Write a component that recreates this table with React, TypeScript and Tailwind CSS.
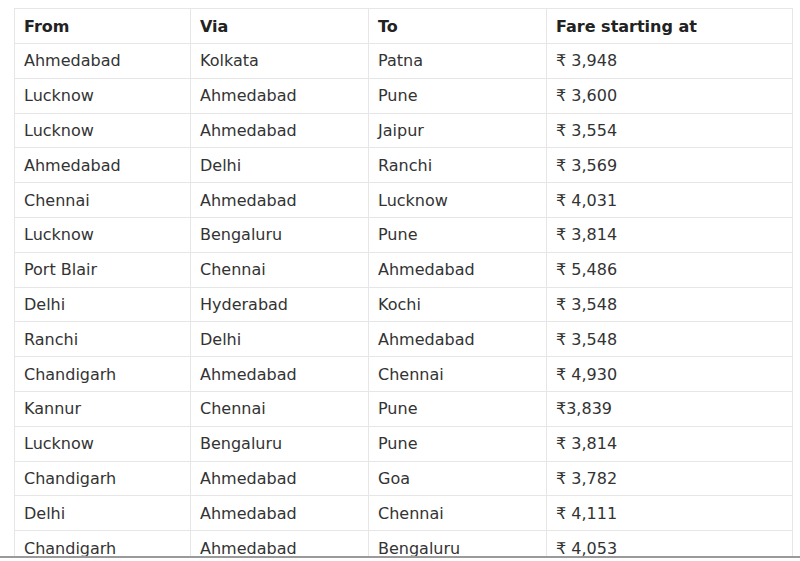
import React from "react";

const rows: [string, string, string, string][] = [
  ["Ahmedabad", "Kolkata", "Patna", "₹ 3,948"],
  ["Lucknow", "Ahmedabad", "Pune", "₹ 3,600"],
  ["Lucknow", "Ahmedabad", "Jaipur", "₹ 3,554"],
  ["Ahmedabad", "Delhi", "Ranchi", "₹ 3,569"],
  ["Chennai", "Ahmedabad", "Lucknow", "₹ 4,031"],
  ["Lucknow", "Bengaluru", "Pune", "₹ 3,814"],
  ["Port Blair", "Chennai", "Ahmedabad", "₹ 5,486"],
  ["Delhi", "Hyderabad", "Kochi", "₹ 3,548"],
  ["Ranchi", "Delhi", "Ahmedabad", "₹ 3,548"],
  ["Chandigarh", "Ahmedabad", "Chennai", "₹ 4,930"],
  ["Kannur", "Chennai", "Pune", "₹3,839"],
  ["Lucknow", "Bengaluru", "Pune", "₹ 3,814"],
  ["Chandigarh", "Ahmedabad", "Goa", "₹ 3,782"],
  ["Delhi", "Ahmedabad", "Chennai", "₹ 4,111"],
  ["Chandigarh", "Ahmedabad", "Bengaluru", "₹ 4,053"],
];

export default function App() {
  return (
    <div
      className="w-[800px] h-[561px] bg-white overflow-hidden"
      style={{ fontFamily: '"DejaVu Sans", Verdana, sans-serif' }}
    >
      <div className="h-[556px] overflow-hidden pt-[8px] pl-[14px]">
        <div className="w-[779px] border-l border-t border-[#e6e6e6]">
          <div className="grid grid-cols-[176px_178px_178px_246px] h-[35px] text-[16px] font-bold text-[#222]">
            {["From", "Via", "To", "Fare starting at"].map((h) => (
              <div key={h} className="flex items-center pl-[9px] pt-[1px] border-r border-b border-[#e6e6e6]">
                {h}
              </div>
            ))}
          </div>
          {rows.map((r, i) => (
            <div
              key={i}
              className="grid grid-cols-[176px_178px_178px_246px] h-[34.8px] text-[16px] text-[#333]"
            >
              {r.map((c, j) => (
                <div key={j} className="flex items-center pl-[9px] pt-[1px] border-r border-b border-[#e6e6e6]">
                  {c}
                </div>
              ))}
            </div>
          ))}
        </div>
      </div>
      <div className="h-[2px] bg-[#9a9a9a]" />
    </div>
  );
}
